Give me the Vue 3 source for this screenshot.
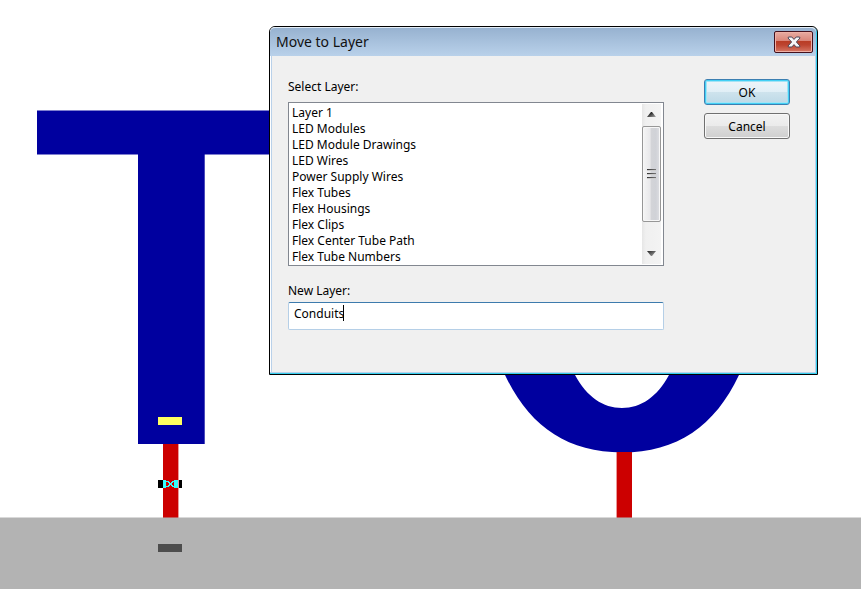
<script setup>
import { ref } from 'vue'

const layers = [
  'Layer 1',
  'LED Modules',
  'LED Module Drawings',
  'LED Wires',
  'Power Supply Wires',
  'Flex Tubes',
  'Flex Housings',
  'Flex Clips',
  'Flex Center Tube Path',
  'Flex Tube Numbers',
]
const selected = ref([])
const newLayer = ref('Conduits')
</script>

<template>
  <main class="workspace">
    <svg class="artwork" aria-hidden="true">
      <path d="M37 110.5H300V154.500H204.700V444H138V154.500H37Z" fill="#00009f" />
      <path
        d="M505 375C529 426 567 452.500 622 452.500S715 426 739 375L739 340H505ZM575 375C587 397 603 408 622 408S657 397 669 375V340H575Z"
        fill="#00009f" fill-rule="evenodd"
      />
      <path d="M163 444H178.400V518H163ZM616.600 452H632V518H616.600Z" fill="#cc0000" />
      <rect x="158" y="417" width="24" height="8" fill="#ffff60" />
      <g shape-rendering="crispEdges">
        <path d="M158 480H163V488H158ZM179 480H182V488H179Z" fill="#000" />
        <path d="M163 480H166V488H163ZM174 480H178V488H174Z" fill="#33ffff" />
        <path
          d="M166 481H169V482H170V483H171V482H172V481H175V482H173V483H172V485H173V486H175V487H172V486H171V485H170V486H169V487H166V486H168V485H169V483H168V482H166Z"
          fill="#33ffff"
        />
      </g>
      <rect x="0" y="517.500" width="100%" height="100%" fill="#b3b3b3" />
      <rect x="158" y="544" width="24" height="8" fill="#4d4d4d" />
    </svg>

    <form class="dialog" role="dialog" aria-labelledby="dialog-title" @submit.prevent>
      <header class="titlebar">
        <h1 id="dialog-title">Move to Layer</h1>
        <button class="close" type="button" aria-label="Close">
          <svg width="14" height="12" viewBox="0 0 14 12" aria-hidden="true">
            <path
              d="M1.500 1H4.800L7 3.400 9.200 1H12.500L13 2 9.400 6 13 10 12.500 11H9.200L7 8.600 4.800 11H1.500L1 10 4.600 6 1 2Z"
              fill="#f6f6f8" stroke="#4a4658" stroke-width="1"
            />
          </svg>
        </button>
      </header>

      <div class="content">
        <div class="fields">
          <label for="layer-list">Select Layer:</label>
          <div class="listbox">
            <select id="layer-list" v-model="selected" multiple size="10">
              <option v-for="layer in layers" :key="layer">{{ layer }}</option>
            </select>
            <div class="scrollbar" aria-hidden="true">
              <svg class="arrow" viewBox="0 0 19 22">
                <defs>
                  <linearGradient id="arrow-up" x1="0" x2="1" y1="0" y2="1">
                    <stop offset="0.200" stop-color="#111" />
                    <stop offset="1" stop-color="#aaa" />
                  </linearGradient>
                </defs>
                <path d="M9 8H10L14 13H5Z" fill="url(#arrow-up)" />
              </svg>
              <div class="thumb"><i></i><i></i><i></i></div>
              <div class="track"></div>
              <svg class="arrow" viewBox="0 0 19 22">
                <defs>
                  <linearGradient id="arrow-down" x1="0" x2="1" y1="0" y2="1">
                    <stop offset="0" stop-color="#222" />
                    <stop offset="1" stop-color="#aaa" />
                  </linearGradient>
                </defs>
                <path d="M5 9H14L10 14H9Z" fill="url(#arrow-down)" />
              </svg>
            </div>
          </div>
          <label for="new-layer">New Layer:</label>
          <div class="textbox">
            <input id="new-layer" v-model="newLayer" type="text" autocomplete="off" spellcheck="false" />
            <span class="caret"></span>
          </div>
        </div>
        <div class="actions">
          <button class="action primary" type="submit">OK</button>
          <button class="action" type="button">Cancel</button>
        </div>
      </div>
    </form>
  </main>
</template>

<style>
body {
  background: #fff;
}
</style>

<style scoped>
* {
  box-sizing: border-box;
}

.workspace {
  position: relative;
  height: 100vh;
  overflow: hidden;
  font-family: "Noto Sans", sans-serif;
  font-size: 12px;
  line-height: 16px;
  color: #000;
}

.artwork {
  display: block;
  width: 100%;
  height: 100%;
}

.dialog {
  position: absolute;
  left: 269px;
  top: 26px;
  width: 549px;
  background: #f0f0f0;
  border: 1px solid #000;
  border-radius: 6px 6px 0 0;
  box-shadow: inset -1px -1px #35cfee, inset -2px -2px #b9d1ea, inset 1px 0 #fff, inset 2px 0 #b9d1ea;
}

.titlebar {
  display: flex;
  align-items: center;
  justify-content: space-between;
  height: 29px;
  margin-right: 1px;
  padding: 0 3px 0 6px;
  background: linear-gradient(#97b2d0, #b9d1ea);
  border-top: 1px solid #e4eef8;
  border-radius: 5px 5px 0 0;
}

h1 {
  margin: 0;
  font: 400 14px/20px "Noto Sans", sans-serif;
  color: #111;
}

.close {
  display: flex;
  align-items: center;
  justify-content: center;
  width: 39px;
  height: 22px;
  padding: 0;
  background: linear-gradient(#e8aca2, #d98478 45%, #b93c25 46%, #bd4430 65%, #d67866);
  border: 1px solid #43101c;
  border-radius: 2px;
  box-shadow: inset 0 0 0 1px #eeb0a6;
}

.content {
  display: flex;
  gap: 40px;
  padding: 23px 27px 44px 18px;
}

.fields {
  display: flex;
  flex: 1;
  flex-direction: column;
  min-width: 0;
}

.listbox {
  display: flex;
  height: 164px;
  margin: 7px 0 17px;
  padding: 1px 2px 1px 1px;
  background: #fff;
  border: 1px solid #828790;
}

select {
  flex: 1;
  min-width: 0;
  height: 160px;
  margin: 0;
  padding: 0;
  overflow: hidden;
  scrollbar-width: none;
  font: inherit;
  color: inherit;
  background: #fff;
  border: 0;
  outline: 0;
}

option {
  height: 16px;
  min-height: 16px;
  padding: 0 2px;
  line-height: 16px;
}

.scrollbar {
  display: flex;
  flex-direction: column;
  width: 19px;
  background: linear-gradient(90deg, #e6e6e6, #f0f0f0 20%, #f3f3f3);
}

.arrow {
  width: 19px;
  height: 22px;
}

.thumb {
  display: flex;
  flex-direction: column;
  align-items: center;
  justify-content: center;
  gap: 2px;
  height: 96px;
  background: linear-gradient(90deg, #f5f5f5, #e9e9eb 40%, #d3d4d8 50%, #d0d2d7 75%, #dedfe3);
  border: 1px solid #979797;
  border-radius: 2px;
  box-shadow: inset 0 0 0 1px #f7f7f7;
}

.thumb i {
  width: 9px;
  height: 2px;
  background: linear-gradient(90deg, #333, #777);
  border-bottom: 1px solid #ccc;
}

.track {
  flex: 1;
}

.textbox {
  position: relative;
  display: flex;
  margin-top: 3px;
}

input {
  width: 100%;
  height: 28px;
  padding: 0 5px 6px;
  font: inherit;
  color: inherit;
  caret-color: transparent;
  background: #fff;
  border: 1px solid #b5cfe7;
  border-top-color: #3d7bad;
  border-radius: 2px;
  outline: 0;
}

.caret {
  position: absolute;
  top: 3px;
  left: 55px;
  width: 1px;
  height: 16px;
  background: #000;
}

.actions {
  display: flex;
  flex-direction: column;
  gap: 8px;
  width: 86px;
}

.action {
  height: 26px;
  padding: 2px 0 0;
  font: inherit;
  color: inherit;
  background: linear-gradient(#f2f2f2, #ebebeb 49%, #dddddd 50%, #cfcfcf);
  border: 1px solid #707070;
  border-radius: 3px;
  box-shadow: inset 0 0 0 1px #f8f8f8;
}

.primary {
  background: linear-gradient(#eef5f9, #e1eff6 49%, #cee3ed 50%, #bdd9e7);
  border-color: #3c7fb1;
  box-shadow: inset 0 0 0 1px #43d0f5, inset 0 0 0 2px #a4e3f5;
}
</style>
